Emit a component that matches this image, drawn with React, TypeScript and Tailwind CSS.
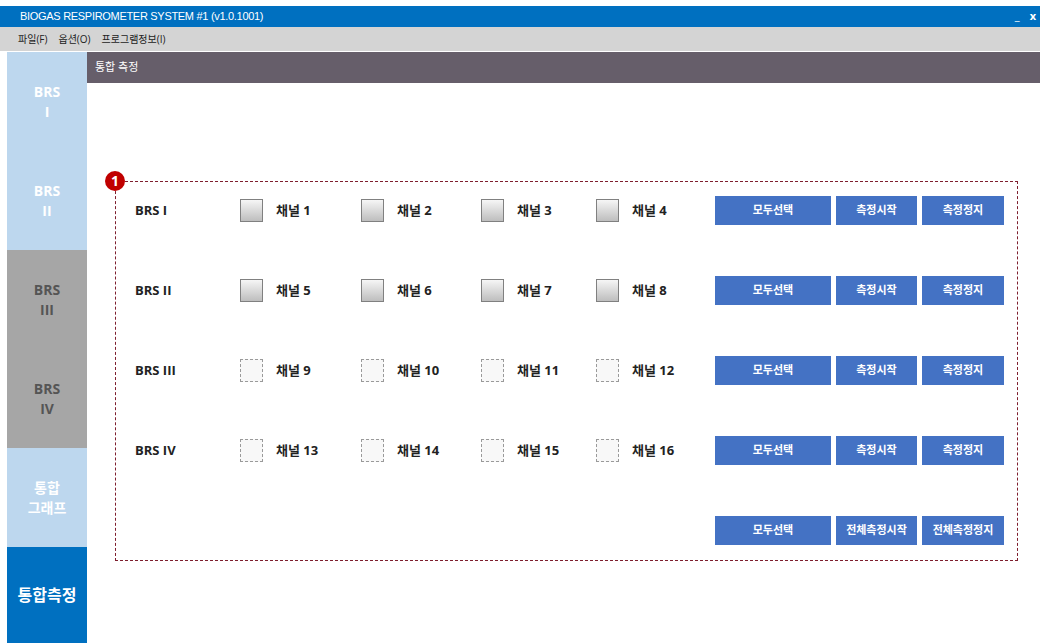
import React from 'react';

const font = { fontFamily: '"Open Sans", "Noto Sans CJK KR", sans-serif' };

interface NavItem {
  lines: string[];
  tone: 'light' | 'gray' | 'active';
}

const navItems: NavItem[] = [
  { lines: ['BRS', 'I'], tone: 'light' },
  { lines: ['BRS', 'II'], tone: 'light' },
  { lines: ['BRS', 'III'], tone: 'gray' },
  { lines: ['BRS', 'IV'], tone: 'gray' },
  { lines: ['통합', '그래프'], tone: 'light' },
  { lines: ['통합측정'], tone: 'active' },
];

const groups = [
  { name: 'BRS I', channels: [1, 2, 3, 4], enabled: true },
  { name: 'BRS II', channels: [5, 6, 7, 8], enabled: true },
  { name: 'BRS III', channels: [9, 10, 11, 12], enabled: false },
  { name: 'BRS IV', channels: [13, 14, 15, 16], enabled: false },
];

const colWidths = ['w-[121px]', 'w-[120px]', 'w-[115px]', 'w-[119px]'];

function SideNav() {
  return (
    <div className="flex w-[80px] flex-col">
      {navItems.map((item, i) => {
        const tone =
          item.tone === 'light'
            ? 'h-[99px] bg-[#bdd7ee] text-white text-[14px]'
            : item.tone === 'gray'
            ? 'h-[99px] bg-[#a6a6a6] text-[#555555] text-[14px]'
            : 'flex-1 bg-[#0070c0] text-white text-[16px]';
        return (
          <div
            key={i}
            className={`flex flex-col items-center justify-center font-bold leading-[20px] ${tone}`}
          >
            {item.lines.map((l) => (
              <span key={l}>{l}</span>
            ))}
          </div>
        );
      })}
    </div>
  );
}

function ChannelBox({ enabled }: { enabled: boolean }) {
  return enabled ? (
    <div className="h-[23px] w-[23px] border border-[#808080] bg-gradient-to-b from-[#f6f6f6] to-[#bebebe]" />
  ) : (
    <div className="h-[23px] w-[23px] border border-dashed border-[#9a9a9a] bg-[#f8f8f8]" />
  );
}

function ActionButton({ label, width }: { label: string; width: string }) {
  return (
    <button className={`h-[29px] ${width} bg-[#4472c4] text-[11px] font-bold text-white`}>
      {label}
    </button>
  );
}

function ButtonSet({ start, stop }: { start: string; stop: string }) {
  return (
    <div className="ml-auto flex gap-[5px] pr-[13px]">
      <ActionButton label="모두선택" width="w-[116px]" />
      <ActionButton label={start} width="w-[81px]" />
      <ActionButton label={stop} width="w-[82px]" />
    </div>
  );
}

export default function App() {
  return (
    <div className="flex h-[643px] w-[1040px] flex-col overflow-hidden bg-white" style={font}>
      <div className="h-[6px] bg-white" />
      <div className="flex h-[21px] items-center bg-[#0070c0] pl-[20px] pr-[4px] text-white">
        <span className="text-[11px] tracking-[-0.3px]" style={{ fontFamily: '"Liberation Sans", sans-serif' }}>
          BIOGAS RESPIROMETER SYSTEM #1 (v1.0.1001)
        </span>
        <span className="ml-auto mr-[10px] text-[11px]">_</span>
        <span className="text-[11px] font-bold">x</span>
      </div>
      <div className="flex h-[24px] items-center gap-[11px] bg-[#d4d4d4] pl-[18px] text-[10px] text-[#222]">
        <span>파일(F)</span>
        <span>옵션(O)</span>
        <span>프로그램정보(I)</span>
      </div>
      <div className="flex flex-1 pt-[1px]">
        <div className="w-[7px]" />
        <SideNav />
        <div className="flex flex-1 flex-col">
          <div className="flex h-[31px] items-center bg-[#665e6a] pl-[8px] text-[11px] text-white">
            통합 측정
          </div>
          <div className="pl-[28px] pt-[98px]">
            <div className="relative flex w-[903px] flex-col gap-[51px] border border-dashed border-[#7e1e2e] pb-[15px] pt-[14px]">
              <div className="absolute -left-[11px] -top-[11px] flex h-[20px] w-[20px] items-center justify-center rounded-full bg-[#c00000] text-[14px] font-bold leading-none text-white">
                1
              </div>
              {groups.map((g) => (
                <div key={g.name} className="flex h-[29px] items-center">
                  <div className="w-[124px] pl-[19px] text-[13px] font-bold text-[#222]">{g.name}</div>
                  {g.channels.map((ch, i) => (
                    <div key={ch} className={`flex items-center ${colWidths[i]}`}>
                      <ChannelBox enabled={g.enabled} />
                      <span className="ml-[13px] text-[13px] font-bold text-[#222]">채널 {ch}</span>
                    </div>
                  ))}
                  <ButtonSet start="측정시작" stop="측정정지" />
                </div>
              ))}
              <div className="flex h-[29px] items-center">
                <ButtonSet start="전체측정시작" stop="전체측정정지" />
              </div>
            </div>
          </div>
        </div>
      </div>
    </div>
  );
}
